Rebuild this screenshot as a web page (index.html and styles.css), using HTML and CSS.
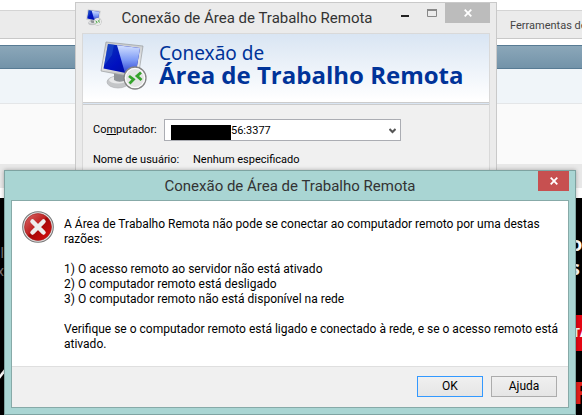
FILE: index.html
```
<!DOCTYPE html>
<html lang="pt-BR">
<head>
  <meta charset="UTF-8">
  <title>Conexão de Área de Trabalho Remota</title>
  <link rel="stylesheet" href="styles.css">
</head>
<body>

  <div class="page">
    <div class="toolbar"><a href="#">Ferramentas de</a></div>
    <div class="nav"></div>
    <div class="subnav"></div>
    <div class="content"></div>
    <div class="content-end"></div>
    <div class="promo">
      <div class="promo-left">
        <span class="faded">l</span>
        <span class="faded">x</span>
        <svg class="slash" width="5" height="12" viewBox="0 0 5 12"><path d="M-1 9L5 1" stroke="#fff" stroke-width="2.5"/></svg>
      </div>
      <div class="promo-right">
        <span class="promo-text">o</span>
        <span class="promo-text">s</span>
        <span class="promo-button">TA</span>
        <span class="promo-red">F</span>
      </div>
    </div>
  </div>

  <div class="window remote">
    <div class="titlebar">
      <svg class="app-icon" width="16" height="17" viewBox="0 0 48 49">
        <use href="#remote-icon"/>
      </svg>
      <span class="title">Conexão de Área de Trabalho Remota</span>
      <button class="control" type="button" aria-label="Minimizar">
        <svg width="10" height="10" viewBox="0 0 10 10"><path d="M1 7h8v2H1z" fill="#222"/></svg>
      </button>
      <button class="control maximize" type="button" aria-label="Maximizar">
        <svg width="10" height="8" viewBox="0 0 10 8"><path d="M.5 1v6.500h9V1" fill="none" stroke="#888"/><path d="M0 0h10v2H0z" fill="#888"/></svg>
      </button>
      <button class="control close-grey" type="button" aria-label="Fechar">
        <svg width="8" height="8" viewBox="0 0 8 8"><path d="M.7.7l6.600 6.600M7.300.7L.7 7.300" stroke="#fff" stroke-width="1.800"/></svg>
      </button>
    </div>
    <div class="client">
      <div class="banner">
        <svg class="banner-icon" width="48" height="49" viewBox="0 0 48 49">
          <defs>
            <linearGradient id="screen" x1="0" y1="0" x2="1" y2="1">
              <stop offset="0" stop-color="#0a35b8"/>
              <stop offset=".5" stop-color="#0010c0"/>
              <stop offset="1" stop-color="#00108a"/>
            </linearGradient>
            <linearGradient id="shine" x1="0" y1="0" x2="0" y2="1">
              <stop offset="0" stop-color="#d3e0ff"/>
              <stop offset=".5" stop-color="#7d9af5"/>
              <stop offset="1" stop-color="#2237cc"/>
            </linearGradient>
            <linearGradient id="metal" x1="0" y1="0" x2="0" y2="1">
              <stop offset="0" stop-color="#c8cacd"/>
              <stop offset=".7" stop-color="#eee"/>
              <stop offset="1" stop-color="#aaa"/>
            </linearGradient>
          </defs>
          <g id="remote-icon">
            <ellipse cx="18" cy="41" rx="11" ry="6" fill="#c4c6c8" stroke="#a8aaac" stroke-width=".6"/>
            <ellipse cx="18" cy="39" rx="9" ry="3.500" fill="#e7e8e9"/>
            <path d="M14 31l11 2-1 7q-6 2-10-1z" fill="#909498"/>
            <path d="M6 1L43 5 38 37 1 30z" fill="url(#metal)" stroke="#999da1" stroke-width=".7"/>
            <path d="M8 3L40 7 35.500 34 3.500 27.500z" fill="url(#screen)"/>
            <path d="M17 4.200L40 7 35.500 34 25 32z" fill="url(#shine)"/>
            <path d="M8 3L14 3.800 12 14 4 25z" fill="#2455cd" opacity=".5"/>
            <circle cx="35" cy="37" r="11" fill="#f1f1f1" stroke="#858585" stroke-width="1.300"/>
            <circle cx="35" cy="37" r="9.500" fill="#e4e5e4" stroke="#fff" stroke-width="1"/>
            <path d="M29 35l4.500 3.500-4 4M41 31.500L37 35l4.500 4" fill="none" stroke="#35a32b" stroke-width="2.800"/>
          </g>
        </svg>
        <div class="banner-text">
          <span class="banner-small">Conexão de</span>
          <strong class="banner-big">Área de Trabalho Remota</strong>
        </div>
      </div>
      <div class="fields">
        <div class="field">
          <label for="computer">Co<u>m</u>putador:</label>
          <div class="combo">
            <select id="computer"><option>56:3377</option></select>
            <span class="mask"></span>
            <svg class="chevron" width="7" height="6" viewBox="0 0 7 6"><path d="M.5 1L3.500 4 6.500 1" fill="none" stroke="#555" stroke-width="2"/></svg>
          </div>
        </div>
        <div class="field">
          <span class="user-label">Nome de usuário:</span>
          <span>Nenhum especificado</span>
        </div>
      </div>
    </div>
  </div>

  <div class="window dialog" role="dialog" aria-labelledby="dialog-title">
    <div class="titlebar dialog-titlebar">
      <span class="title" id="dialog-title">Conexão de Área de Trabalho Remota</span>
      <button class="control close-red" type="button" aria-label="Fechar">
        <svg width="8" height="8" viewBox="0 0 8 8"><path d="M.7.7l6.600 6.600M7.300.7L.7 7.300" stroke="#fff" stroke-width="1.800"/></svg>
      </button>
    </div>
    <div class="dialog-body">
      <div class="message">
        <svg class="error-icon" width="32" height="32" viewBox="0 0 32 32">
          <defs>
            <linearGradient id="red" x1="0" y1="0" x2="1" y2="1">
              <stop offset="0" stop-color="#d86a6a"/>
              <stop offset=".45" stop-color="#bf2222"/>
              <stop offset=".5" stop-color="#a30808"/>
              <stop offset="1" stop-color="#e01010"/>
            </linearGradient>
          </defs>
          <circle cx="16" cy="16" r="15.300" fill="#e4e4e4" stroke="#777" stroke-width="1.100"/>
          <circle cx="16" cy="16" r="13.500" fill="url(#red)" stroke="#9c1c1c" stroke-width=".6"/>
          <path d="M10.500 10.500l11 11M21.500 10.500l-11 11" stroke="#eee" stroke-width="4.500" stroke-linecap="round"/>
        </svg>
        <div class="message-text">
          <p>A Área de Trabalho Remota não pode se conectar ao computador remoto por uma destas<br>razões:</p>
          <p>1) O acesso remoto ao servidor não está ativado<br>2) O computador remoto está desligado<br>3) O computador remoto não está disponível na rede</p>
          <p>Verifique se o computador remoto está ligado e conectado à rede, e se o acesso remoto está<br>ativado.</p>
        </div>
      </div>
      <div class="actions">
        <button class="button primary" type="button">OK</button>
        <button class="button" type="button">Ajuda</button>
      </div>
    </div>
  </div>

</body>
</html>
```
FILE: styles.css
```
* {
  box-sizing: border-box;
}
body {
  margin: 0;
  min-height: 100vh;
  position: relative;
  overflow: hidden;
  font-family: Roboto, "Open Sans", sans-serif;
  font-size: 12px;
  color: #000;
  background-color: #fff;
}
button {
  font-family: inherit;
  padding: 0;
}
.page {
  display: flex;
  flex-direction: column;
  height: 100vh;
  padding-top: 10px;
}
.toolbar {
  height: 29px;
  padding-left: 510px;
  line-height: 28px;
  background-color: #ebebeb;
  border-top: 1px solid #d4d4d4;
  border-bottom: 1px solid #c8c8c8;
  white-space: nowrap;
  overflow: hidden;
}
.toolbar a {
  font-size: 11px;
  color: #444;
  text-decoration: none;
}
.nav {
  height: 24px;
  margin-top: 6px;
  background: linear-gradient(#8ba7b9, #7393a9);
  border-top: 1px solid #587b94;
  border-bottom: 1px solid #587b94;
}
.subnav {
  height: 35px;
  background-color: #f0f5f9;
  border-bottom: 1px solid #e4e6e8;
}
.content {
  height: 60px;
  background-color: #fafafa;
}
.content-end {
  height: 24px;
  background-color: #e8e8e8;
}
.promo {
  flex: 1;
  display: flex;
  justify-content: space-between;
  margin-top: 10px;
  background-color: #000;
  overflow: hidden;
}
.promo-left {
  display: flex;
  flex-direction: column;
  width: 4px;
  padding-top: 46px;
  overflow: hidden;
}
.faded {
  color: #777;
  font-size: 14px;
  line-height: 18px;
  direction: rtl;
}
.slash {
  margin-top: 89px;
}
.promo-right {
  display: flex;
  flex-direction: column;
  width: 12px;
  padding-top: 34px;
  overflow: hidden;
  color: #fff;
  font-family: "Open Sans", sans-serif;
  font-weight: bold;
}
.promo-text {
  font-size: 20px;
  line-height: 24px;
}
.promo-button {
  height: 36px;
  margin-top: 35px;
  padding-left: 3px;
  line-height: 36px;
  background-color: #e30613;
}
.promo-red {
  padding-left: 3px;
  margin-top: 24px;
  font-size: 30px;
  line-height: 36px;
  color: #e3201b;
}
.window {
  position: absolute;
  border: 1px solid;
}
.titlebar {
  display: flex;
  align-items: flex-start;
}
.title {
  flex: 1;
  text-align: center;
  font-size: 15px;
  line-height: 30px;
  color: #333;
  white-space: nowrap;
}
.control {
  display: flex;
  align-items: center;
  justify-content: center;
  width: 26px;
  height: 20px;
  border: none;
  background: none;
}
.remote {
  top: 2px;
  left: 75px;
  right: 85px;
  height: 200px;
  padding: 0 6px;
  background-color: #ebebeb;
  border-color: #c9c9c9;
}
.app-icon {
  margin: 6px 0 0 4px;
}
.maximize {
  width: 27px;
}
.close-grey {
  width: 45px;
  background-color: #bcbcbc;
}
.client {
  height: 170px;
  background-color: #f0f0f0;
  border: 1px solid #d9d9d9;
}
.banner {
  display: flex;
  height: 71px;
  padding: 7px 0 0 17px;
  background: linear-gradient(#d9e5f3, #fff 66px);
  border-bottom: 3px double #ccc;
}
.banner-text {
  display: flex;
  flex-direction: column;
  padding-top: 1px;
  margin-left: 11px;
  color: #003399;
  font-family: "Noto Sans", sans-serif;
  font-size: 19px;
  line-height: 22px;
  white-space: nowrap;
}
.banner-big {
  font-family: "Open Sans", sans-serif;
  font-size: 24px;
}
.fields {
  padding: 14px 10px;
}
.field {
  display: flex;
  align-items: center;
  margin-bottom: 11px;
  font-size: 11px;
  line-height: 16px;
}
.field label {
  width: 71px;
}
.user-label {
  width: 100px;
}
.combo {
  position: relative;
  width: 237px;
}
.combo select {
  display: block;
  appearance: none;
  width: 100%;
  height: 22px;
  padding: 0 20px 0 66px;
  border: 1px solid #abadb3;
  border-radius: 0;
  background-color: #fff;
  font-family: inherit;
  font-size: 11px;
  color: #000;
}
.mask {
  position: absolute;
  top: 6px;
  left: 7px;
  width: 60px;
  height: 15px;
  background-color: #000;
}
.chevron {
  position: absolute;
  top: 9px;
  right: 5px;
  pointer-events: none;
}
.dialog {
  top: 170px;
  left: 4px;
  right: 6px;
  padding: 0 6px 6px;
  background-color: #a9d5d3;
  border-color: #7ea3a1;
  box-shadow: 0 0 4px rgba(0, 0, 0, 0.3);
}
.dialog-titlebar {
  height: 29px;
}
.dialog-titlebar .title {
  padding-left: 31px;
}
.close-red {
  width: 31px;
  background-color: #c75050;
}
.dialog-body {
  background-color: #fff;
  border: 1px solid #87aaa8;
}
.message {
  display: flex;
  gap: 10px;
  min-height: 165px;
  padding: 10px;
}
.error-icon {
  flex: none;
}
.message-text {
  padding-top: 6px;
  line-height: 15px;
  white-space: nowrap;
}
.message-text p {
  margin: 0 0 15px;
}
.message-text p:last-child {
  margin-bottom: 0;
}
.actions {
  display: flex;
  justify-content: flex-end;
  gap: 8px;
  padding: 9px 11px 10px;
  background-color: #f0f0f0;
  border-top: 1px solid #dfdfdf;
}
.button {
  width: 66px;
  height: 21px;
  border: 1px solid #acacac;
  background: linear-gradient(#f0f0f0, #e5e5e5);
  font-size: 12px;
  line-height: 19px;
  color: #000;
}
.primary {
  border-color: #3399ff;
}
```
